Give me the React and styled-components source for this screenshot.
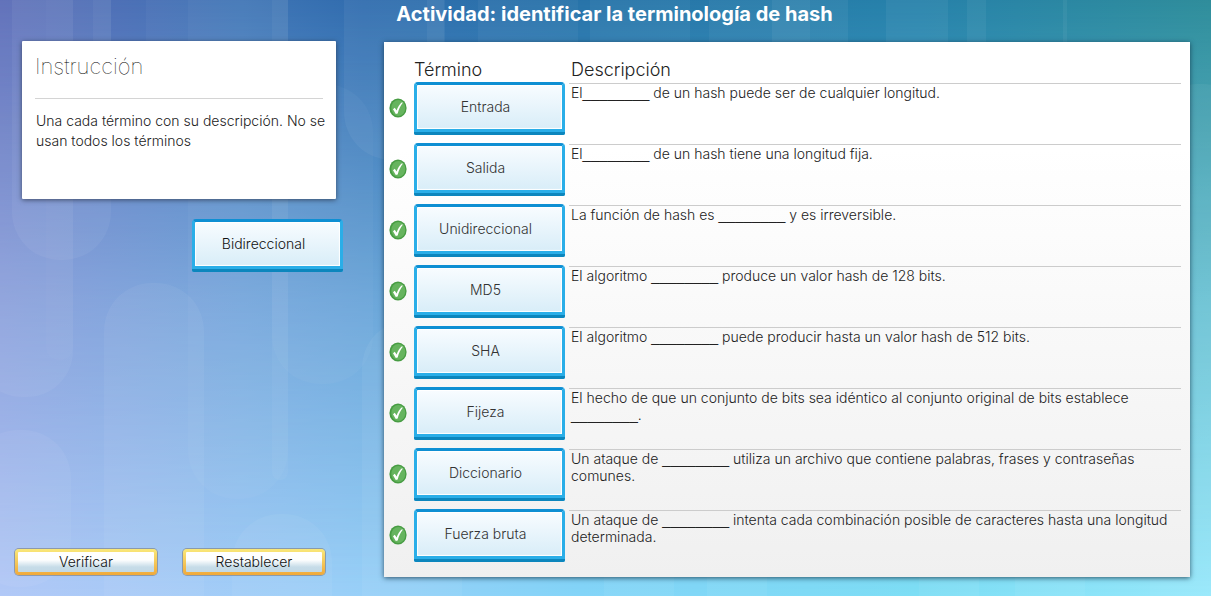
import React from "react";
import styled, { createGlobalStyle } from "styled-components";

const GlobalStyle = createGlobalStyle`
  *, *::before, *::after { box-sizing: border-box; }
  body {
    margin: 0;
    font-family: Inter, "Liberation Sans", sans-serif;
    font-size: 14px;
    font-weight: 300;
    color: #222;
  }
`;

const Page = styled.div`
  position: relative;
  isolation: isolate;
  min-height: 100vh;
  display: flex;
  flex-direction: column;
  background: linear-gradient(90deg, #b2c9f7 0%, #9bd0f8 28%, #84d5f8 48%, #7edef5 76%, #97e8fb 100%);
  overflow: hidden;

  &::before {
    content: "";
    position: absolute;
    inset: 0;
    z-index: -2;
    background: linear-gradient(90deg, #5a6bb7 0%, #3f74b5 20%, #306cae 30%, #2773a9 48%, #2681aa 76%, #2f8d9b 100%);
    mask-image: linear-gradient(180deg, #000 0%, rgba(0, 0, 0, 0.42) 50%, transparent 100%);
  }
`;

const Streaks = styled.svg`
  position: absolute;
  inset: 0;
  z-index: -1;
  width: 100%;
  height: 100%;
`;

const Title = styled.h1`
  margin: 0;
  padding: 0 0 0 18px;
  height: 28px;
  font-size: 20px;
  line-height: 28px;
  font-weight: 700;
  text-align: center;
  color: #fff;
`;

const Main = styled.main`
  flex: 1;
  display: grid;
  grid-template-columns: 343px minmax(0, 1fr);
  column-gap: 41px;
  padding: 12px 21px 19px 0;
`;

const Side = styled.aside`
  display: flex;
  flex-direction: column;
`;

const Instruction = styled.section`
  min-height: 158px;
  margin: 1px 7px 0 22px;
  padding: 9px 6px 10px 13px;
  background: #fff;
  border-radius: 1px;
  box-shadow: 0 1px 5px rgba(40, 50, 70, 0.75);

  h2 {
    margin: 0 7px 12px 0;
    padding: 0 0 16px;
    border-bottom: 1px solid #d4d4d4;
    font-size: 22px;
    line-height: 32px;
    font-weight: 100;
    color: #000;
  }
  p {
    margin: 0;
    padding-left: 1px;
    line-height: 20px;
  }
`;

const Tile = styled.button`
  display: block;
  position: relative;
  width: 151px;
  height: 53px;
  padding: 0 8px 2px 0;
  border: 3px solid #2aaee8;
  border-top-color: #0e8fd3;
  border-bottom-width: 6px;
  border-radius: 4px 4px 2px 2px;
  background: linear-gradient(180deg, #f8fcff, #d8edf8) padding-box;
  box-shadow: inset 0 0 1px 1px #fff;
  font: inherit;
  color: ${(p) => (p.$free ? "#111" : "#333")};
  cursor: grab;

  &::after {
    content: "";
    position: absolute;
    left: -3px;
    right: -3px;
    bottom: -6px;
    height: 3px;
    background: #0c86bd;
    border-radius: 0 0 2px 2px;
  }
`;

const Pool = styled.div`
  display: flex;
  justify-content: flex-end;
  padding: 20px 0;
`;

const Actions = styled.div`
  display: flex;
  gap: 26px;
  margin-top: auto;
  padding: 0 0 2px 15px;
`;

const Action = styled.button`
  width: 142px;
  height: 26px;
  padding: 0;
  border: 3px solid transparent;
  border-radius: 4px;
  background:
    linear-gradient(180deg, #fff 0%, #fdfefe 40%, #c6dce8 75%, #c2d9e6 100%) padding-box,
    linear-gradient(180deg, #f9e87a, #f0a93a) border-box;
  box-shadow: 0 0 0 1px rgba(128, 138, 150, 0.75);
  font: inherit;
  line-height: 20px;
  color: #111;
  cursor: pointer;
`;

const Board = styled.section`
  margin-top: 2px;
  padding: 0 9px 7px 0;
  background: linear-gradient(180deg, #fff 20%, #f0f0f0 100%);
  box-shadow: 0 1px 5px rgba(20, 50, 70, 0.8);
`;

const Matches = styled.table`
  width: 100%;
  table-layout: fixed;
  border-collapse: collapse;

  th, td { padding: 0; vertical-align: top; text-align: left; }
  thead th, thead td { height: 40px; }
  th { padding-top: 18px; font-size: 18px; line-height: 20px; font-weight: 300; }
  th:last-child { padding-left: 2px; }
  tbody td { height: 61px; }
`;

const MarkCol = styled.col`width: 30px;`;
const TermCol = styled.col`width: 155px;`;

const Description = styled.p`
  margin: 1px 0 0;
  padding: 0 2px;
  border-top: 1px solid #ccc;
  line-height: 17px;
`;

const Blank = styled.span`
  font-family: "Liberation Sans", Arial, sans-serif;
  font-size: 15px;
`;

const Mark = styled.svg`
  display: block;
  width: 18px;
  height: 20px;
  margin: 16px 0 0 5px;
`;

function Check() {
  return (
    <Mark viewBox="0 0 18 20" role="img" aria-label="Correcto">
      <ellipse cx="9" cy="10" rx="8.6" ry="9.6" fill="#479c42" />
      <ellipse cx="9.3" cy="10" rx="7" ry="8" fill="#66b45e" />
      <path d="M4 11.2 5.8 9.8 7.6 12.5C8.8 9 10.6 6 13 4.2L13.8 4.8C11.6 7.5 9.8 11 8.7 15.6L6.8 16Z" fill="#fff" />
    </Mark>
  );
}

const rows = [
  ["Entrada", "El", " de un hash puede ser de cualquier longitud."],
  ["Salida", "El", " de un hash tiene una longitud fija."],
  ["Unidireccional", "La función de hash es ", " y es irreversible."],
  ["MD5", "El algoritmo ", " produce un valor hash de 128 bits."],
  ["SHA", "El algoritmo ", " puede producir hasta un valor hash de 512 bits."],
  ["Fijeza", "El hecho de que un conjunto de bits sea idéntico al conjunto original de bits establece ", "."],
  ["Diccionario", "Un ataque de ", " utiliza un archivo que contiene palabras, frases y contraseñas comunes."],
  ["Fuerza bruta", "Un ataque de ", " intenta cada combinación posible de caracteres hasta una longitud determinada."],
];

function Backdrop() {
  return (
    <Streaks aria-hidden="true" fill="#fff" fillOpacity="0.05">
      <rect x="12" y="-80" width="99" height="340" rx="48" />
      <rect x="-24" y="-80" width="97" height="477" rx="46" />
      <rect x="46" y="-80" width="27" height="440" rx="13" fillOpacity="0.02" />
      <rect x="93" y="-80" width="18" height="200" rx="9" fillOpacity="0.04" />
      <rect x="188" y="-80" width="100" height="579" rx="48" fillOpacity="0.03" />
      <rect x="-30" y="430" width="101" height="157" rx="48" />
      <rect x="104" y="283" width="100" height="400" rx="48" />
      <rect x="146" y="-80" width="142" height="280" rx="10" fillOpacity="0.03" />
      <rect x="272" y="-80" width="16" height="560" rx="8" fillOpacity="0.04" />
      <rect x="232" y="514" width="100" height="160" rx="48" />
      <rect x="272" y="84" width="101" height="300" rx="48" fillOpacity="0.03" />
      <rect x="344" y="-80" width="100" height="240" rx="48" />
      <rect x="362" y="320" width="100" height="400" rx="48" />
      <rect x="427" y="-80" width="18" height="200" />
      <rect x="478" y="-80" width="100" height="200" fillOpacity="0.04" />
      <rect x="590" y="-80" width="100" height="200" fillOpacity="0.04" />
      <rect x="709" y="-80" width="101" height="200" fillOpacity="0.04" />
      <rect x="772" y="-80" width="76" height="200" fillOpacity="0.05" />
      <rect x="886" y="-80" width="62" height="200" />
      <rect x="967" y="-80" width="19" height="200" />
      <rect x="1063" y="-80" width="4" height="200" />
      <rect x="1150" y="84" width="101" height="600" rx="48" />
      <rect x="604" y="500" width="70" height="120" fillOpacity="0.05" />
      <rect x="707" y="500" width="60" height="120" fillOpacity="0.05" />
      <rect x="919" y="500" width="60" height="120" fillOpacity="0.05" />
      <rect x="1015" y="500" width="70" height="120" fillOpacity="0.05" />
    </Streaks>
  );
}

export default function App() {
  return (
    <Page>
      <GlobalStyle />
      <Backdrop />
      <Title>Actividad: identificar la terminología de hash</Title>
      <Main>
        <Side>
          <Instruction>
            <h2>Instrucción</h2>
            <p>Una cada término con su descripción. No se usan todos los términos</p>
          </Instruction>
          <Pool>
            <Tile type="button" $free>Bidireccional</Tile>
          </Pool>
          <Actions>
            <Action type="button">Verificar</Action>
            <Action type="button">Restablecer</Action>
          </Actions>
        </Side>
        <Board>
          <Matches>
            <colgroup>
              <MarkCol />
              <TermCol />
              <col />
            </colgroup>
            <thead>
              <tr>
                <td />
                <th scope="col">Término</th>
                <th scope="col">Descripción</th>
              </tr>
            </thead>
            <tbody>
              {rows.map(([term, before, after]) => (
                <tr key={term}>
                  <td><Check /></td>
                  <td><Tile type="button">{term}</Tile></td>
                  <td>
                    <Description>{before}<Blank>________</Blank>{after}</Description>
                  </td>
                </tr>
              ))}
            </tbody>
          </Matches>
        </Board>
      </Main>
    </Page>
  );
}
